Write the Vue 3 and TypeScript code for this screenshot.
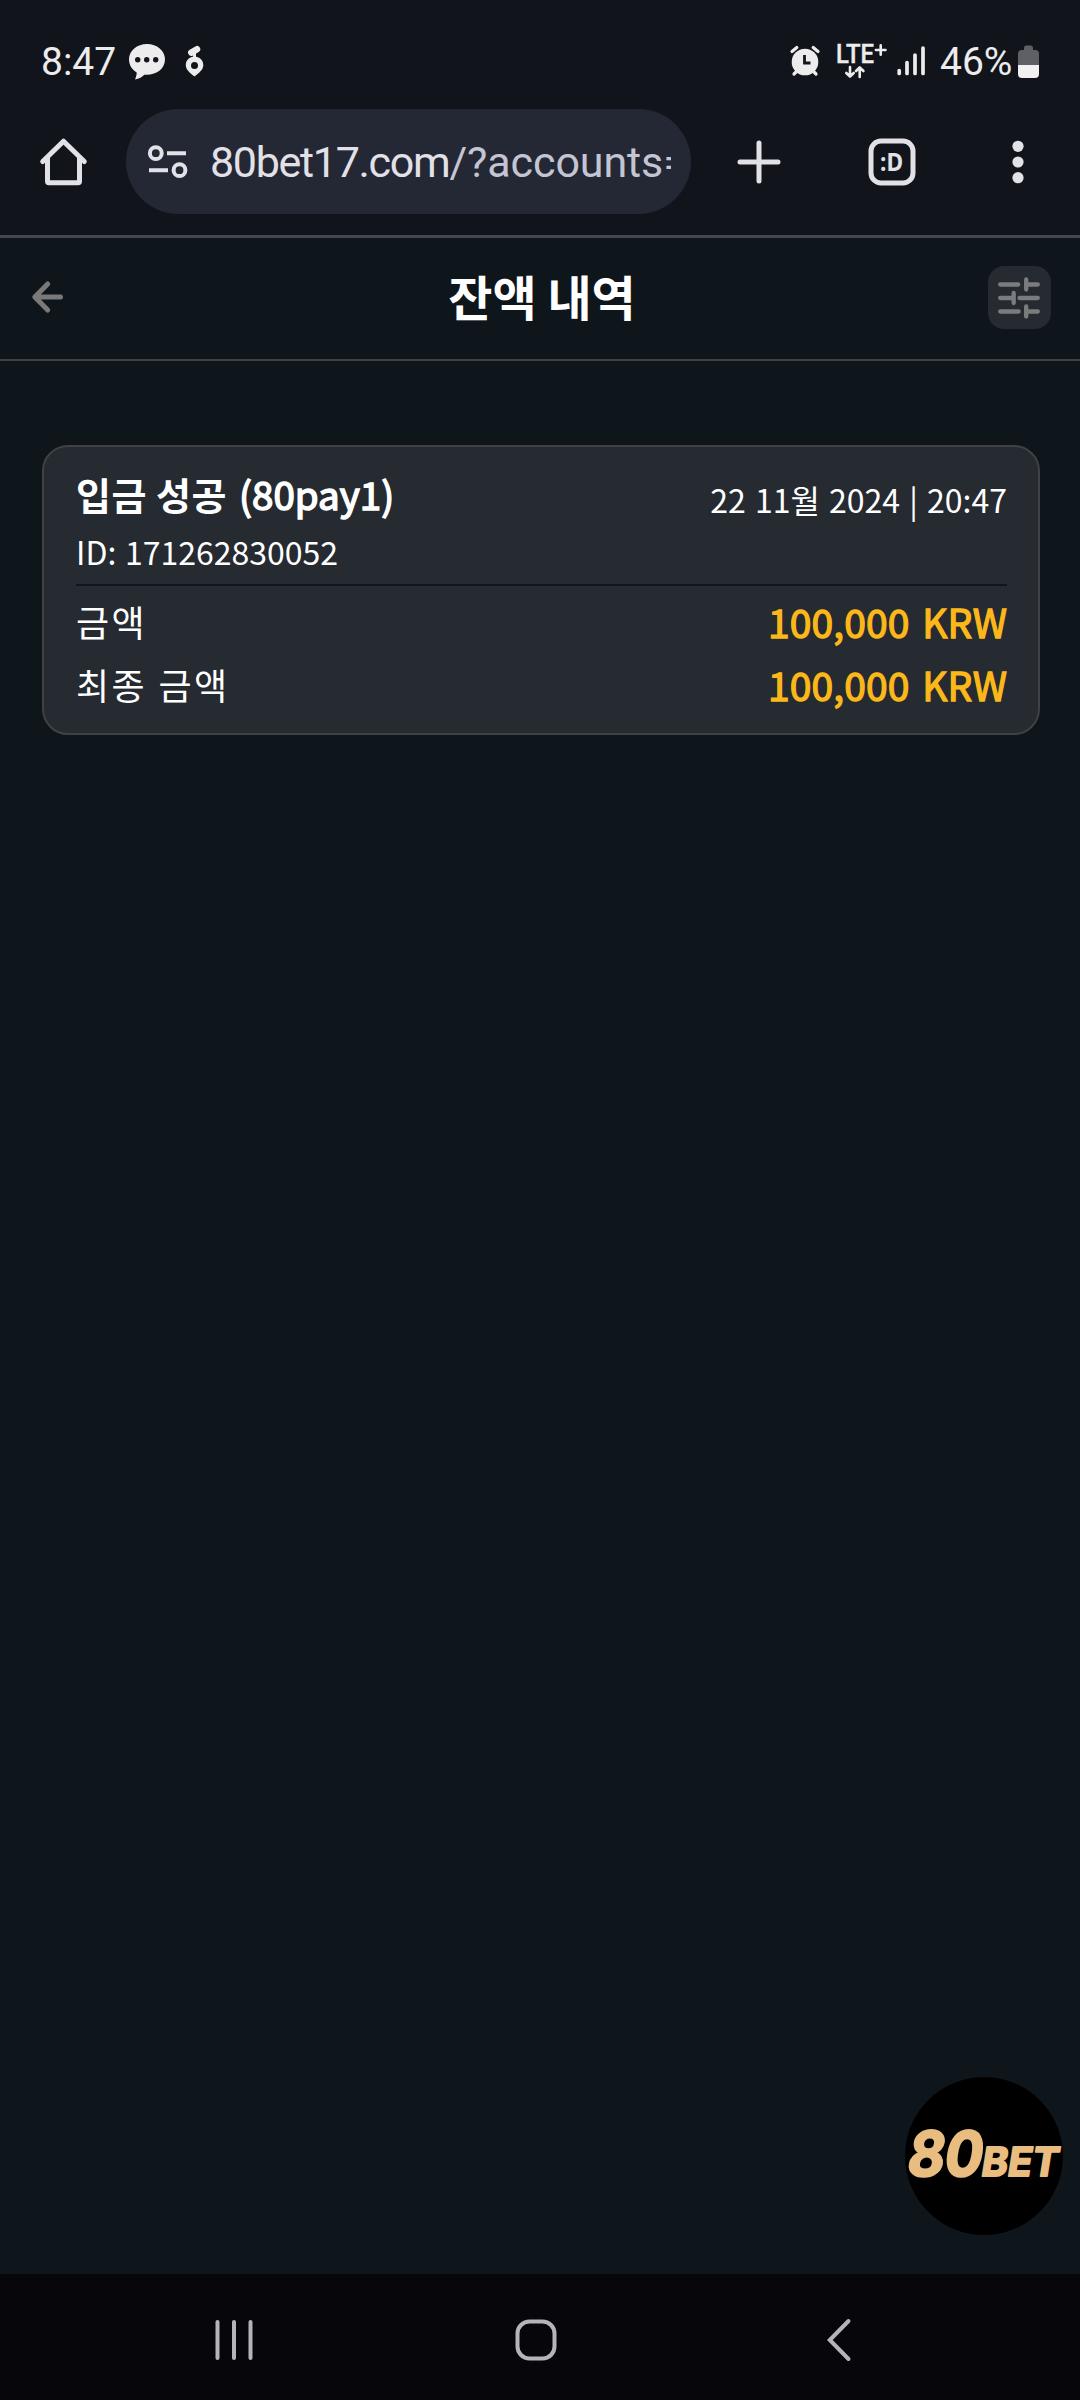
<script setup lang="ts">
interface AmountRow {
  label: string
  value: string
}

const rows: AmountRow[] = [
  { label: '금액', value: '100,000 KRW' },
  { label: '최종 금액', value: '100,000 KRW' },
]
</script>

<template>
  <div class="screen">
    <div class="browser">
      <div class="status">
        <span class="clock">8:47</span>
        <svg class="chat" width="38" height="38" viewBox="0 0 38 38">
          <path d="M19 2C9 2 1 8.800 1 17.300c0 5.700 3 10.500 7.700 13.200 0 2.500-.7 4.500-1.700 7 4-.8 7.300-2.700 9.300-4.800 11.700 1 20.700-5.700 20.700-15.400C37 8.800 29 2 19 2z" fill="#ececec" />
          <circle cx="9.700" cy="17.700" r="2.700" fill="#11141b" />
          <circle cx="18.700" cy="17.700" r="2.700" fill="#11141b" />
          <circle cx="27.700" cy="17.700" r="2.700" fill="#11141b" />
        </svg>
        <svg class="carrot" width="20" height="32" viewBox="0 0 20 32">
          <path fill-rule="evenodd" d="M9.500 11.500c5 0 8.800 3.600 8.800 8.500 0 5-4.600 8-8.800 11.500C5.300 28 .8 25 .8 20c0-4.900 3.700-8.500 8.700-8.500zM9.500 17a3.500 3.500 0 1 0 0 7 3.500 3.500 0 0 0 0-7z" fill="#ececec" />
          <path d="M6.300 7.600L12 4.200" stroke="#ececec" stroke-width="6.500" stroke-linecap="round" />
          <path d="M9.500 8v4" stroke="#ececec" stroke-width="3" />
        </svg>
        <svg class="alarm" width="30" height="32" viewBox="0 0 30 32">
          <circle cx="15" cy="17" r="13.300" fill="#ececec" />
          <path d="M2 6.500L6.800 2.500M28 6.500L23.200 2.500M4 29l4-4M26 29l-4-4" stroke="#ececec" stroke-width="3.200" stroke-linecap="round" />
          <path d="M14.500 10v8h6" fill="none" stroke="#11141b" stroke-width="2.800" />
        </svg>
        <svg class="lte" width="52" height="36" viewBox="0 0 52 36">
          <text x="0" y="20" textLength="38" lengthAdjust="spacingAndGlyphs" class="lte-text">LTE</text>
          <path d="M44.700 2.200v9.600M39.900 7h9.600" stroke="#ececec" stroke-width="2.600" stroke-linecap="round" />
          <path d="M14 24v9.500M10.300 30l3.700 3.700 3.700-3.700M23.700 34v-9.500M20 28l3.700-3.700 3.700 3.700" fill="none" stroke="#ececec" stroke-width="2.600" stroke-linecap="round" stroke-linejoin="round" />
        </svg>
        <svg class="signal" width="28" height="30" viewBox="0 0 28 30">
          <path d="M2.200 24.500v3M10 16.500v11M18 9v18.500M26 2v25.500" stroke="#ececec" stroke-width="3.700" stroke-linecap="round" />
        </svg>
        <span class="percent">46%</span>
        <svg class="battery" width="21" height="33" viewBox="0 0 21 33">
          <path d="M0 9q0-4 4-4h2V3q0-2.500 2.500-2.500h4Q15 .5 15 3v2h2q4 0 4 4v11H0z" fill="#5f6065" />
          <path d="M0 20h21v9q0 4-4 4H4q-4 0-4-4z" fill="#f1f1f1" />
        </svg>
      </div>

      <div class="toolbar">
        <svg class="home" width="48" height="48" viewBox="0 0 48 48" fill="none" stroke="#e3e1e8" stroke-width="5" stroke-linejoin="round" stroke-linecap="round">
          <path d="M2.700 23.500L23.500 3.200l20.800 20.300" />
          <path d="M7.500 20v23.200q0 1.500 1.500 1.500h29q1.500 0 1.500-1.500V20" />
        </svg>
        <div class="omnibox">
          <svg width="40" height="34" viewBox="0 0 40 34" fill="none" stroke="#e3e1e8" stroke-width="4">
            <circle cx="7.800" cy="8.200" r="5.900" />
            <path d="M19 8.200h19M1 25.200h19" />
            <circle cx="31.500" cy="25.200" r="5.900" />
          </svg>
          <div class="url"><span class="host">80bet17.com</span><span class="query">/?accounts=</span></div>
        </div>
        <svg class="plus" width="44" height="44" viewBox="0 0 44 44">
          <path d="M22 3v38M3 22h38" stroke="#e3e1e8" stroke-width="5" stroke-linecap="round" />
        </svg>
        <svg class="tabs" width="48" height="48" viewBox="0 0 48 48">
          <rect x="3" y="3" width="42" height="42" rx="10" fill="none" stroke="#e3e1e8" stroke-width="5" />
          <text x="12" y="32.500" textLength="23" lengthAdjust="spacingAndGlyphs" class="tab-text">:D</text>
        </svg>
        <svg class="more" width="12" height="44" viewBox="0 0 12 44" fill="#e3e1e8">
          <circle cx="6" cy="6.300" r="5.600" />
          <circle cx="6" cy="22" r="5.600" />
          <circle cx="6" cy="37.700" r="5.600" />
        </svg>
      </div>
    </div>

    <header class="header">
      <svg width="32" height="32" viewBox="0 0 32 32" fill="none" stroke="#797979" stroke-width="5" stroke-linecap="round" stroke-linejoin="round">
        <path d="M28.500 16H3.500M15.700 3L2.800 16l12.900 13" />
      </svg>
      <h1>잔액 내역</h1>
      <button class="filter">
        <svg width="44" height="44" viewBox="0 0 44 44" stroke="#7b7c7e" stroke-width="4.300" stroke-linecap="round">
          <path d="M3.200 8.500h18M29.500 8.500h11.300M29.200 3.500v10M3.200 22h12M16.700 17v10M22.500 22h18.300M3.200 35.500h18.500M29.500 35.500h11.300M29.200 30.500v10" />
        </svg>
      </button>
    </header>

    <main class="content">
      <section class="card">
        <div class="card-head">
          <div class="line">
            <strong>입금 성공 <span class="method">(80pay1)</span></strong>
            <time>22 11월 2024 | 20:47</time>
          </div>
          <div class="ident">ID: 171262830052</div>
        </div>
        <div v-for="row in rows" :key="row.label" class="row">
          <span class="label">{{ row.label }}</span>
          <span class="value">{{ row.value }}</span>
        </div>
      </section>
      <div class="brand">
        <svg width="158" height="158" viewBox="0 0 158 158">
          <circle cx="79" cy="79" r="79" fill="#000" />
          <g transform="translate(0 102) skewX(-9)">
            <text x="0" y="-3" textLength="75" lengthAdjust="spacingAndGlyphs" class="brand-num">80</text>
            <text x="74.500" y="-3" textLength="77" lengthAdjust="spacingAndGlyphs" class="brand-word">BET</text>
          </g>
        </svg>
      </div>
    </main>

    <nav class="nav">
      <svg width="40" height="42" viewBox="0 0 40 42" stroke="#b5b4b8" stroke-width="4" stroke-linecap="round">
        <path d="M3.500 3v36M20 3v36M36.500 3v36" />
      </svg>
      <svg class="nav-home" width="42" height="42" viewBox="0 0 42 42" fill="none" stroke="#b5b4b8" stroke-width="4">
        <rect x="2.500" y="2.500" width="37" height="37" rx="12" />
      </svg>
      <svg width="24" height="42" viewBox="0 0 24 42" fill="none" stroke="#b5b4b8" stroke-width="4" stroke-linecap="round">
        <path d="M21.500 2L2.800 21l18.700 19" />
      </svg>
    </nav>
  </div>
</template>

<style>
body {
  margin: 0;
  background: #0f161b;
}
</style>

<style scoped>
.screen {
  display: flex;
  flex-direction: column;
  width: 1080px;
  height: 2400px;
  overflow: hidden;
  background: #0f161b;
  color: #fff;
  font-family: 'Noto Sans CJK KR', sans-serif;
}
svg {
  display: block;
  flex: none;
  overflow: visible;
}
.browser {
  box-sizing: border-box;
  height: 238px;
  background: #11141b;
  border-bottom: 3px solid #45464f;
}
.status {
  display: flex;
  align-items: center;
  box-sizing: border-box;
  height: 109px;
  padding: 26px 41px 0;
  color: #ececec;
  font-family: Roboto, sans-serif;
  font-size: 39px;
}
.status svg {
  margin-bottom: 13px;
}
.clock,
.percent {
  margin-bottom: 12px;
  white-space: nowrap;
}
.clock {
  width: 87px;
}
.status .carrot {
  margin-left: 19px;
}
.status .alarm {
  margin-left: auto;
}
.status .lte {
  margin-left: 16px;
}
.lte-text {
  font: 500 25px Roboto, sans-serif;
  fill: #ececec;
  stroke: #ececec;
  stroke-width: 0.4;
}
.status .signal {
  margin-left: 9px;
}
.percent {
  width: 78px;
  margin-left: 15px;
}
.toolbar {
  display: flex;
  align-items: center;
  height: 105px;
}
.home {
  margin-left: 40px;
}
.omnibox {
  display: flex;
  align-items: center;
  box-sizing: border-box;
  width: 565px;
  height: 105px;
  margin-left: 38px;
  padding: 0 20px 0 22px;
  border-radius: 53px;
  background: #242834;
}
.url {
  flex: 1;
  margin-left: 22px;
  overflow: hidden;
  white-space: nowrap;
  font-family: Roboto, sans-serif;
  font-size: 43px;
  line-height: 60px;
  color: #e3e1e8;
}
.host {
  letter-spacing: -1.3px;
}
.query {
  letter-spacing: -0.1px;
  color: #c4c5d2;
}
.plus {
  margin-left: 46px;
}
.tabs {
  margin-left: 87px;
}
.tab-text {
  font: 700 25px 'Noto Sans', sans-serif;
  fill: #e3e1e8;
}
.more {
  margin-left: 96px;
}
.header {
  display: flex;
  align-items: center;
  justify-content: space-between;
  box-sizing: border-box;
  height: 123px;
  padding: 0 29px 0 32px;
  border-bottom: 2px solid #3f4142;
}
.header > svg {
  margin-right: 32px;
  margin-bottom: 4px;
}
h1 {
  margin: 0 0 7px;
  font-size: 48px;
  font-weight: 700;
  line-height: 70px;
}
.filter {
  display: flex;
  align-items: center;
  justify-content: center;
  width: 63px;
  height: 63px;
  margin: 0 0 2px;
  padding: 0;
  border: 0;
  border-radius: 16px;
  background: #262b31;
}
.content {
  display: flex;
  flex-direction: column;
  justify-content: space-between;
  flex: 1;
  padding: 84px 40px 39px 42px;
}
.card {
  box-sizing: border-box;
  height: 290px;
  padding: 16px 31px 0 32px;
  border: 2px solid #3f4142;
  border-radius: 26px;
  background: #262a31;
}
.card-head {
  height: 121px;
  margin-bottom: 4px;
  border-bottom: 2px solid #11151c;
}
.line {
  display: flex;
  justify-content: space-between;
  height: 63px;
}
strong {
  font-size: 38px;
  line-height: 60px;
  letter-spacing: 0.5px;
}
.method {
  margin-left: 3px;
  font-size: 38.5px;
  font-weight: 400;
  letter-spacing: 0;
  -webkit-text-stroke: 1.5px #fff;
}
time {
  padding-top: 6px;
  font-size: 32px;
  line-height: 60px;
  word-spacing: 2px;
}
.ident {
  font-size: 32px;
  line-height: 50px;
  word-spacing: 1.5px;
}
.row {
  display: flex;
  align-items: center;
  justify-content: space-between;
  height: 63px;
  line-height: 63px;
}
.label {
  font-size: 36px;
  letter-spacing: 2.4px;
  word-spacing: 1px;
}
.value {
  font-size: 39px;
  letter-spacing: 0.1px;
  word-spacing: 4px;
  color: #fcb81b;
  -webkit-text-stroke: 1.3px #fcb81b;
}
.brand {
  align-self: flex-end;
  margin-right: -23px;
}
.brand-num {
  font: 700 62px Inter, sans-serif;
  fill: #e9bd80;
  stroke: #e9bd80;
  stroke-width: 2.5;
  stroke-linejoin: round;
}
.brand-word {
  font: 700 40px Inter, sans-serif;
  fill: #e9bd80;
  stroke: #e9bd80;
  stroke-width: 2;
  stroke-linejoin: round;
}
.nav {
  display: flex;
  align-items: center;
  justify-content: space-between;
  box-sizing: border-box;
  height: 126px;
  padding: 6px 229px 0 214px;
  background: #07070b;
}
.nav-home {
  margin-right: 9px;
}
</style>
